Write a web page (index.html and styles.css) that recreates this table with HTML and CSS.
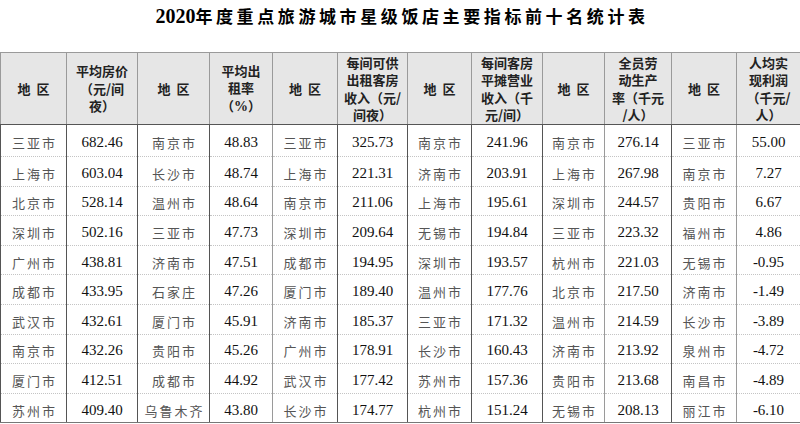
FILE: index.html
```html
<!DOCTYPE html>
<html lang="zh-CN">
<head>
<meta charset="utf-8">
<title>2020年度重点旅游城市星级饭店主要指标前十名统计表</title>
<link rel="stylesheet" href="styles.css">
</head>
<body>
<h1 class="title"><span class="num">2020</span>年度重点旅游城市星级饭店主要指标前十名统计表</h1>
<table class="stats">
<colgroup>
<col class="c66"><col class="c71"><col class="c72"><col class="c63"><col class="c65"><col class="c70"><col class="c64"><col class="c71"><col class="c62"><col class="c67"><col class="c65"><col class="c64">
</colgroup>
<thead>
<tr>
<th><span class="sp">地区</span></th>
<th>平均房价<br>（元/间<br>夜）</th>
<th><span class="sp">地区</span></th>
<th>平均出<br>租率<br>（<span class="pct">%</span>）</th>
<th><span class="sp">地区</span></th>
<th>每间可供<br>出租客房<br>收入（元/<br>间夜）</th>
<th><span class="sp">地区</span></th>
<th>每间客房<br>平摊营业<br>收入（千<br>元/间）</th>
<th><span class="sp">地区</span></th>
<th>全员劳<br>动生产<br>率（千元<br>/人）</th>
<th><span class="sp">地区</span></th>
<th>人均实<br>现利润<br>（千元/<br>人）</th>
</tr>
</thead>
<tbody>
<tr class="first"><td class="city">三亚市</td><td class="n">682.46</td><td class="city">南京市</td><td class="n lt">48.83</td><td class="city">三亚市</td><td class="n">325.73</td><td class="city">南京市</td><td class="n">241.96</td><td class="city lt">南京市</td><td class="n">276.14</td><td class="city lt">三亚市</td><td class="n">55.00</td></tr>
<tr><td class="city">上海市</td><td class="n">603.04</td><td class="city">长沙市</td><td class="n lt">48.74</td><td class="city">上海市</td><td class="n">221.31</td><td class="city">济南市</td><td class="n">203.91</td><td class="city lt">上海市</td><td class="n">267.98</td><td class="city lt">南京市</td><td class="n">7.27</td></tr>
<tr><td class="city">北京市</td><td class="n">528.14</td><td class="city">温州市</td><td class="n lt">48.64</td><td class="city">南京市</td><td class="n">211.06</td><td class="city">上海市</td><td class="n">195.61</td><td class="city lt">深圳市</td><td class="n">244.57</td><td class="city lt">贵阳市</td><td class="n">6.67</td></tr>
<tr><td class="city">深圳市</td><td class="n">502.16</td><td class="city">三亚市</td><td class="n lt">47.73</td><td class="city">深圳市</td><td class="n">209.64</td><td class="city">无锡市</td><td class="n">194.84</td><td class="city lt">三亚市</td><td class="n">223.32</td><td class="city lt">福州市</td><td class="n">4.86</td></tr>
<tr><td class="city">广州市</td><td class="n">438.81</td><td class="city">济南市</td><td class="n lt">47.51</td><td class="city">成都市</td><td class="n">194.95</td><td class="city">深圳市</td><td class="n">193.57</td><td class="city lt">杭州市</td><td class="n">221.03</td><td class="city lt">无锡市</td><td class="n">-0.95</td></tr>
<tr><td class="city">成都市</td><td class="n">433.95</td><td class="city">石家庄</td><td class="n lt">47.26</td><td class="city">厦门市</td><td class="n">189.40</td><td class="city">温州市</td><td class="n">177.76</td><td class="city lt">北京市</td><td class="n">217.50</td><td class="city lt">济南市</td><td class="n">-1.49</td></tr>
<tr><td class="city">武汉市</td><td class="n">432.61</td><td class="city">厦门市</td><td class="n lt">45.91</td><td class="city">济南市</td><td class="n">185.37</td><td class="city">三亚市</td><td class="n">171.32</td><td class="city lt">温州市</td><td class="n">214.59</td><td class="city lt">长沙市</td><td class="n">-3.89</td></tr>
<tr><td class="city">南京市</td><td class="n">432.26</td><td class="city">贵阳市</td><td class="n lt">45.26</td><td class="city">广州市</td><td class="n">178.91</td><td class="city">长沙市</td><td class="n">160.43</td><td class="city lt">济南市</td><td class="n">213.92</td><td class="city lt">泉州市</td><td class="n">-4.72</td></tr>
<tr><td class="city">厦门市</td><td class="n">412.51</td><td class="city">成都市</td><td class="n lt">44.92</td><td class="city">武汉市</td><td class="n">177.42</td><td class="city">苏州市</td><td class="n">157.36</td><td class="city lt">贵阳市</td><td class="n">213.68</td><td class="city lt">南昌市</td><td class="n">-4.89</td></tr>
<tr class="last"><td class="city">苏州市</td><td class="n">409.40</td><td class="city">乌鲁木齐</td><td class="n lt">43.80</td><td class="city">长沙市</td><td class="n">174.77</td><td class="city">杭州市</td><td class="n">151.24</td><td class="city lt">无锡市</td><td class="n">208.13</td><td class="city lt">丽江市</td><td class="n">-6.10</td></tr>
</tbody>
</table>
</body>
</html>
```

FILE: styles.css
```css
html, body {
  margin: 0;
  padding: 0;
  background: #ffffff;
}

body {
  width: 800px;
  height: 424px;
  overflow: hidden;
  font-family: "Noto Sans CJK SC", sans-serif;
  color: #111;
}

.title {
  margin: 0;
  height: 52px;
  line-height: 31px;
  font-size: 17px;
  font-weight: 700;
  letter-spacing: 3.6px;
  text-align: center;
  padding-left: 4px;
  box-sizing: border-box;
  color: #000;
  font-family: "Noto Sans CJK SC", sans-serif;
}

.title .num {
  font-family: "Liberation Serif", serif;
  font-size: 20px;
  font-weight: 700;
  letter-spacing: 0;
}

.stats {
  width: 800px;
  border-collapse: collapse;
  table-layout: fixed;
}

.c62 { width: 62px; }
.c63 { width: 63px; }
.c64 { width: 64px; }
.c65 { width: 65px; }
.c66 { width: 66px; }
.c67 { width: 67px; }
.c70 { width: 70px; }
.c71 { width: 71px; }
.c72 { width: 72px; }

.stats th {
  height: 71px;
  padding: 0;
  background: #e6e6e6;
  border: 1px solid #9a9a9a;
  border-bottom: 1px solid #555;
  font-size: 13px;
  line-height: 17.5px;
  font-weight: 700;
  color: #222;
  text-align: center;
  vertical-align: middle;
}

.stats th .sp {
  letter-spacing: 6px;
  padding-left: 6px;
}

.stats th .pct {
  font-family: "Liberation Serif", serif;
  font-size: 14px;
  font-weight: 700;
}

.stats td {
  height: 29.6px;
  padding: 4px 0 0;
  box-sizing: border-box;
  text-align: center;
  vertical-align: middle;
  border-left: 1px solid #555;
  border-right: 1px solid #555;
  border-bottom: 1px dotted #c4c4c4;
}

.stats tr.first td {
  height: 32px;
}

.stats tr.last td {
  border-bottom: 1px solid #777;
}

.stats td.lt {
  border-right-color: #9a9a9a;
}

.stats td.city {
  font-size: 13px;
  letter-spacing: 2px;
  padding-left: 2px;
  color: #555;
  font-weight: 400;
}

.stats td.n {
  font-family: "Liberation Serif", serif;
  font-size: 15px;
  color: #111;
}
```
